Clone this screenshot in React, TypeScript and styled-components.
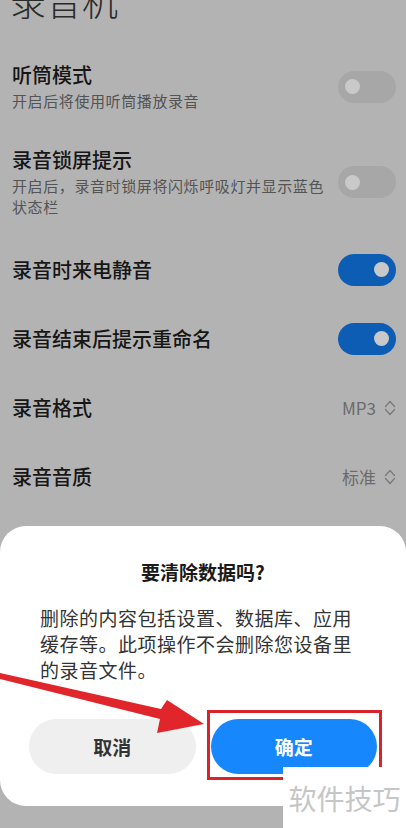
import * as React from 'react';
import styled, { createGlobalStyle } from 'styled-components';

const GlobalStyle = createGlobalStyle`
  html, body {
    margin: 0;
    padding: 0;
  }
  body {
    background: #b3b3b3;
    font-family: "Noto Sans CJK SC", "Noto Sans", sans-serif;
    overflow: hidden;
  }
`;

const Page = styled.div`
  background: #b3b3b3;
  height: 828px;
  overflow: hidden;
  position: relative;
  width: 406px;
`;

const Header = styled.header`
  align-items: flex-end;
  display: flex;
  height: 44px;
  overflow: hidden;
  padding: 0 10px;
`;

const AppTitle = styled.h1`
  color: #2b2b2b;
  font-size: 36px;
  font-weight: 300;
  line-height: 36px;
  margin: 0 0 26px;
`;

const Row = styled.div`
  align-items: center;
  display: flex;
  justify-content: space-between;
  min-height: 33px;
  padding: 18px 10px 18px 12px;
`;

const TextBlock = styled.div`
  flex: 1;
  max-width: 322px;
`;

const Label = styled.div`
  color: #161616;
  font-size: 20px;
  font-weight: 500;
  line-height: 26px;
`;

const Hint = styled.div`
  color: #545454;
  font-size: 15px;
  letter-spacing: 0.6px;
  line-height: 21px;
  margin-top: 2px;
`;

const Track = styled.div<{ $on?: boolean }>`
  align-items: center;
  background: ${(p) => (p.$on ? '#0e5db4' : '#a7a7a7')};
  border-radius: 16px;
  box-sizing: border-box;
  display: flex;
  flex-shrink: 0;
  height: 32px;
  justify-content: ${(p) => (p.$on ? 'flex-end' : 'flex-start')};
  padding: 0 7px;
  width: 58px;
`;

const Knob = styled.div`
  background: #c9c9c9;
  border-radius: 50%;
  height: 15px;
  width: 15px;
`;

const Value = styled.div`
  align-items: center;
  color: #6b6b6b;
  display: flex;
  font-size: 17px;
  gap: 8px;
`;

const Dialog = styled.section`
  background: #ffffff;
  border-radius: 26px;
  bottom: 22px;
  box-sizing: border-box;
  left: 0;
  padding: 33px 0 32px;
  position: absolute;
  right: 0;
`;

const DialogTitle = styled.h2`
  color: #1a1a1a;
  font-size: 19px;
  font-weight: 700;
  line-height: 26px;
  margin: 0;
  text-align: center;
`;

const DialogBody = styled.p`
  color: #333333;
  font-size: 19px;
  letter-spacing: 0.5px;
  line-height: 26px;
  margin: 20px 0 0;
  padding: 0 38px 0 40px;
`;

const Buttons = styled.div`
  display: grid;
  gap: 15px;
  grid-template-columns: 1fr 1fr;
  margin-top: 36px;
  padding: 0 29px;
`;

const DialogButton = styled.button<{ $primary?: boolean }>`
  background: ${(p) => (p.$primary ? '#1787fd' : '#efefef')};
  border: none;
  border-radius: 28px;
  color: ${(p) => (p.$primary ? '#ffffff' : '#333333')};
  font-family: inherit;
  font-size: 19px;
  font-weight: 700;
  height: 55px;
`;

const Annotation = styled.svg`
  left: 0;
  pointer-events: none;
  position: absolute;
  top: 0;
`;

const Watermark = styled.div`
  align-items: center;
  background: #ffffff;
  bottom: 0;
  color: #c6c6c6;
  display: flex;
  font-size: 28px;
  height: 61px;
  justify-content: center;
  position: absolute;
  right: 0;
  width: 123px;
`;

const Chevrons: React.FC = () => (
  <svg width="12" height="18" viewBox="0 0 12 18" fill="none" stroke="#7a7a7a" strokeWidth="1.3" strokeLinecap="round" strokeLinejoin="round">
    <polyline points="1.5,7.5 6,2.5 10.5,7.5" />
    <polyline points="1.5,10.5 6,15.5 10.5,10.5" />
  </svg>
);

const Toggle: React.FC<{ on?: boolean }> = ({ on }) => (
  <Track $on={on}>
    <Knob />
  </Track>
);

export default function App() {
  return (
    <Page>
      <GlobalStyle />
      <Header>
        <AppTitle>录音机</AppTitle>
      </Header>

      <Row>
        <TextBlock>
          <Label>听筒模式</Label>
          <Hint>开启后将使用听筒播放录音</Hint>
        </TextBlock>
        <Toggle />
      </Row>
      <Row>
        <TextBlock>
          <Label>录音锁屏提示</Label>
          <Hint>开启后，录音时锁屏将闪烁呼吸灯并显示蓝色状态栏</Hint>
        </TextBlock>
        <Toggle />
      </Row>
      <Row>
        <Label>录音时来电静音</Label>
        <Toggle on />
      </Row>
      <Row>
        <Label>录音结束后提示重命名</Label>
        <Toggle on />
      </Row>
      <Row>
        <Label>录音格式</Label>
        <Value>
          MP3
          <Chevrons />
        </Value>
      </Row>
      <Row>
        <Label>录音音质</Label>
        <Value>
          标准
          <Chevrons />
        </Value>
      </Row>

      <Dialog>
        <DialogTitle>要清除数据吗?</DialogTitle>
        <DialogBody>删除的内容包括设置、数据库、应用缓存等。此项操作不会删除您设备里的录音文件。</DialogBody>
        <Buttons>
          <DialogButton>取消</DialogButton>
          <DialogButton $primary>确定</DialogButton>
        </Buttons>
      </Dialog>

      <Annotation width="406" height="828" viewBox="0 0 406 828">
        <polygon points="0,673 161,709 167,700 204,724 157,733 160,719 0,679" fill="#e0262a" />
        <rect x="208.5" y="711.5" width="172" height="67" fill="none" stroke="#d8232a" strokeWidth="3" />
      </Annotation>

      <Watermark>软件技巧</Watermark>
    </Page>
  );
}
